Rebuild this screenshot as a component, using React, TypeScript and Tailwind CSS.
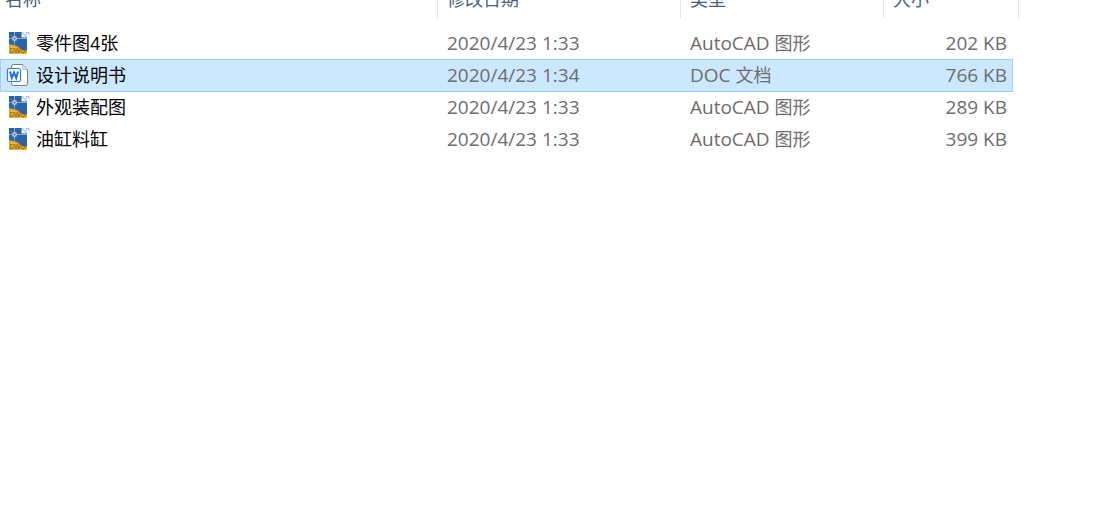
// App.tsx

interface FileItem {
  name: string;
  date: string;
  app: string;
  kind: string;
  size: string;
  icon: 'dwg' | 'doc';
  selected?: boolean;
}

const files: FileItem[] = [
  { name: '零件图4张', date: '2020/4/23 1:33', app: 'AutoCAD', kind: '图形', size: '202 KB', icon: 'dwg' },
  { name: '设计说明书', date: '2020/4/23 1:34', app: 'DOC', kind: '文档', size: '766 KB', icon: 'doc', selected: true },
  { name: '外观装配图', date: '2020/4/23 1:33', app: 'AutoCAD', kind: '图形', size: '289 KB', icon: 'dwg' },
  { name: '油缸料缸', date: '2020/4/23 1:33', app: 'AutoCAD', kind: '图形', size: '399 KB', icon: 'dwg' },
];

const DwgIcon = () => (
  <svg width="24" height="24" viewBox="0 0 24 24" className="shrink-0" aria-hidden="true">
    <path d="M3 1h13l5 5v17H3z" fill="#2d64a3" />
    <path d="M3 13.5c5 0 8 1.500 10.500 3.500s4.500 2.500 7.500 2.500V23H3z" fill="#efb02e" />
    <path d="M8.500 1v12.500M3 7.500h18" stroke="#86abd3" fill="none" />
    <rect x="7" y="6" width="3" height="3" fill="#2d64a3" stroke="#e4eef8" />
    <path d="M15.500 1v5.500H21z" fill="#e3edf7" />
    <path d="M19.500 1.500h2M20.500 1.500v2M22.500 1v2.500M24 1v2.500" stroke="#8fa9c4" strokeWidth="0.800" />
    <text x="3.500" y="22" fontSize="6.500" fill="#6b521b" className="font-['Liberation_Sans_Narrow','Liberation_Sans',sans-serif]">DWG</text>
  </svg>
);

const DocIcon = () => (
  <svg width="24" height="24" viewBox="0 0 24 24" className="shrink-0" aria-hidden="true">
    <path d="M7.500 1.500h9l5 5v14a2 2 0 0 1-2 2h-12a2 2 0 0 1-2-2v-17a2 2 0 0 1 2-2z" fill="#fff" stroke="#7a7a7a" />
    <path d="M16.500 1.500v4a1 1 0 0 0 1 1h4z" fill="#e6e6e6" stroke="#9a9a9a" strokeWidth="0.600" />
    <rect x="1.500" y="5.500" width="13" height="13" rx="1.500" fill="#fff" stroke="#2b7cf0" strokeWidth="1.200" />
    <path d="M4 8.500l1.800 6.500L8 9.500l2.200 5.500L12 8.500" fill="none" stroke="#1f6fe8" strokeWidth="2" />
  </svg>
);

const HeaderCell = ({ label, first, span }: { label: string; first?: boolean; span?: number }) => (
  <th scope="col" colSpan={span} className="h-[47px] p-0 text-left align-top font-normal">
    <div className={`flex h-[38px] items-center border-r border-[#e5e5e5] ${first ? 'pl-[5px]' : 'pl-[9px]'}`}>
      {label}
    </div>
  </th>
);

const FileRow = ({ file }: { file: FileItem }) => {
  // the selection frame shares its lower edge with the next row
  const cell = file.selected
    ? 'h-8 border-t border-[#99d1ff] bg-[#cce8ff] pt-0 pb-[2px] shadow-[0_1px_0_#99d1ff]'
    : 'h-8 border-t border-transparent pt-0 pb-[2px]';

  return (
    <tr aria-selected={!!file.selected}>
      <td className={`${cell} border-l pl-[5px] text-black`}>
        <div className="flex items-center gap-[6px]">
          {file.icon === 'dwg' ? <DwgIcon /> : <DocIcon />}
          <span>{file.name}</span>
        </div>
      </td>
      <td className={`${cell} pl-[9px] text-[19px]`}>{file.date}</td>
      <td className={`${cell} pl-[9px] text-[19px]`}>
        {file.app} <span className="text-lg leading-6">{file.kind}</span>
      </td>
      <td className={`${cell} border-r pr-[5px] text-right text-[19px]`}>{file.size}</td>
    </tr>
  );
};

export default function App() {
  return (
    <main className="min-h-screen overflow-hidden bg-white font-['Open_Sans','Noto_Sans_CJK_SC',sans-serif] text-lg leading-6 text-[#6d6d6d]">
      {/* the list is scrolled so that the column titles are half out of view */}
      <table className="-mt-5 w-full table-fixed border-separate border-spacing-0 whitespace-nowrap">
        <colgroup>
          <col className="w-[438px]" />
          <col className="w-[243px]" />
          <col className="w-[203px]" />
          <col className="w-[129px]" />
          <col className="w-[6px]" />
          <col />
        </colgroup>
        <thead className="text-[#4c607a]">
          <tr>
            <HeaderCell label="名称" first />
            <HeaderCell label="修改日期" />
            <HeaderCell label="类型" />
            <HeaderCell label="大小" span={2} />
          </tr>
        </thead>
        <tbody>
          {files.map((file) => (
            <FileRow key={file.name} file={file} />
          ))}
        </tbody>
      </table>
    </main>
  );
}
